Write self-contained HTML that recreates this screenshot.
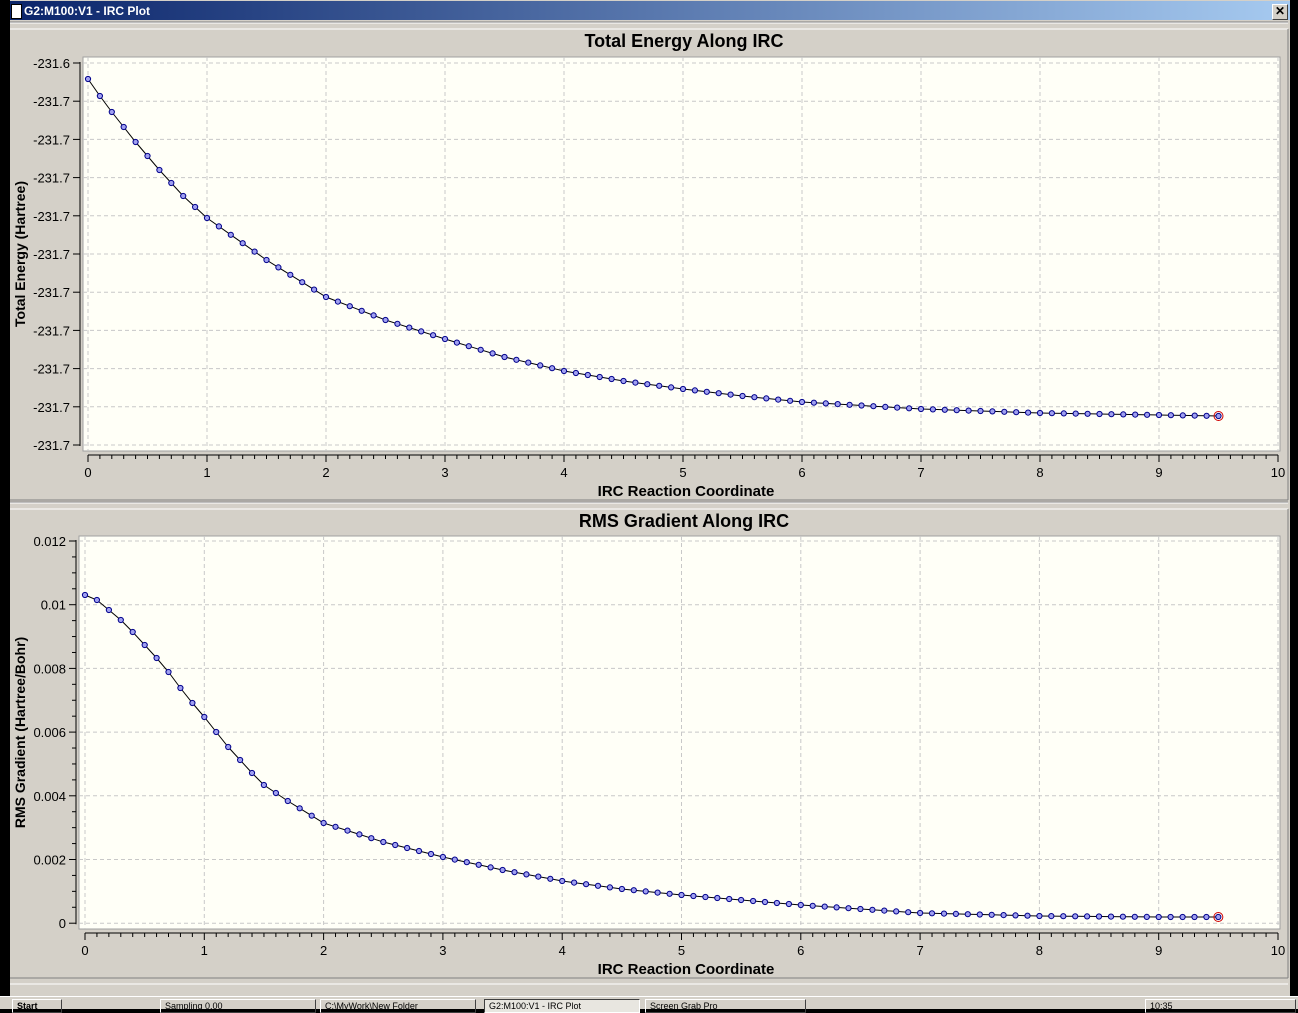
<!DOCTYPE html>
<html><head><meta charset="utf-8">
<style>
html,body{margin:0;padding:0;width:1298px;height:1008px;overflow:hidden;background:#000;font-family:"Liberation Sans",sans-serif;}
#win{position:absolute;left:10px;top:0;width:1280px;height:1008px;background:#d4d0c8;}
#title{position:absolute;left:0;top:1px;width:1280px;height:19px;background:linear-gradient(90deg,#0a246a,#a6caf0);color:#fff;font-weight:bold;font-size:12px;line-height:20px;}
#title span{position:absolute;left:14px;top:0;}
#ico{position:absolute;left:1px;top:3px;width:9px;height:13px;background:#fff;border:1px solid #000;}
#close{position:absolute;right:2px;top:3px;width:14px;height:14px;background:#d4d0c8;border:1px solid;border-color:#fff #404040 #404040 #fff;color:#000;font-size:12px;line-height:13px;text-align:center;font-weight:bold;}
svg{position:absolute;left:0;top:0;}
#task{position:absolute;left:0;top:996px;width:1298px;height:12px;background:#d4d0c8;border-top:1px solid #fff;}
.tb{position:absolute;top:2px;height:12px;border:1px solid;border-color:#fff #404040 #404040 #fff;font-size:9px;line-height:12px;padding-left:4px;}
</style></head><body>
<div id="win"></div>
<svg id="s" width="1298" height="1008" xmlns="http://www.w3.org/2000/svg"></svg>
<div id="title" style="left:10px;"><div id="ico"></div><span>G2:M100:V1 - IRC Plot</span><div id="close">✕</div></div>
<div id="task">
<div class="tb" style="left:12px;width:44px;font-weight:bold;">Start</div>
<div class="tb" style="left:160px;width:150px;">Sampling 0.00</div>
<div class="tb" style="left:320px;width:150px;">C:\MyWork\New Folder</div>
<div class="tb" style="left:484px;width:150px;background:#e8e6e0;border-color:#404040 #fff #fff #404040;">G2:M100:V1 - IRC Plot</div>
<div class="tb" style="left:645px;width:155px;">Screen Grab Pro</div>
<div class="tb" style="left:1145px;width:145px;">10:35</div>
</div>
<script>
var s=document.getElementById('s'),h='';
function panel(top,bot,title,ytitle,px0,px1,py0,py1,x0,x10,ylabels,ylpos,pts,labelX){
  h+='<line x1="10" y1="'+(top)+'" x2="1288" y2="'+top+'" stroke="#808080"/>';
  h+='<line x1="10" y1="'+(top+1)+'" x2="1288" y2="'+(top+1)+'" stroke="#fff"/>';
  h+='<line x1="10" y1="'+(top+7)+'" x2="1288" y2="'+(top+7)+'" stroke="#fff"/>';
  h+='<line x1="1288" y1="'+(top+7)+'" x2="1288" y2="'+bot+'" stroke="#808080"/>';
  h+='<line x1="10" y1="'+bot+'" x2="1288" y2="'+bot+'" stroke="#808080"/>';
  h+='<text x="684" y="'+(top+25)+'" text-anchor="middle" font-weight="bold" font-size="18">'+title+'</text>';
  h+='<rect x="'+px0+'" y="'+py0+'" width="'+(px1-px0)+'" height="'+(py1-py0)+'" fill="#fffff7" stroke="#a0a0a0"/>';
  var u=(x10-x0)/10;
  for(var i=0;i<=10;i++){var x=x0+i*u;
    h+='<line x1="'+x+'" y1="'+py0+'" x2="'+x+'" y2="'+py1+'" stroke="#c8c8c8" stroke-dasharray="4,3"/>';
    h+='<line x1="'+x+'" y1="'+(py1+4)+'" x2="'+x+'" y2="'+(py1+11)+'" stroke="#000"/>';
    h+='<text x="'+x+'" y="'+(py1+26)+'" text-anchor="middle" font-size="13">'+i+'</text>';
  }
  for(var i=0;i<100;i++){if(i%10==0)continue;var x=x0+i*u/10;
    h+='<line x1="'+x+'" y1="'+(py1+4)+'" x2="'+x+'" y2="'+(py1+8)+'" stroke="#000"/>';}
  h+='<line x1="'+x0+'" y1="'+(py1+4)+'" x2="'+x10+'" y2="'+(py1+4)+'" stroke="#000"/>';
  h+='<text x="686" y="'+(py1+45)+'" text-anchor="middle" font-weight="bold" font-size="15">IRC Reaction Coordinate</text>';
  var ax=px0-3;
  h+='<line x1="'+ax+'" y1="'+(ylpos[0]-1)+'" x2="'+ax+'" y2="'+(ylpos[ylpos.length-1]+1)+'" stroke="#000"/>';
  for(var j=0;j<ylabels.length;j++){var y=ylpos[j];
    h+='<line x1="'+px0+'" y1="'+y+'" x2="'+px1+'" y2="'+y+'" stroke="#c8c8c8" stroke-dasharray="4,3"/>';
    h+='<line x1="'+(ax-7)+'" y1="'+y+'" x2="'+ax+'" y2="'+y+'" stroke="#000"/>';
    h+='<text x="'+(ax-10)+'" y="'+(y+5)+'" text-anchor="end" font-size="13">'+ylabels[j]+'</text>';
    if(j<ylabels.length-1&&labelX){for(var k=1;k<4;k++){var yy=y+(ylpos[j+1]-y)*k/4;h+='<line x1="'+(ax-4)+'" y1="'+yy+'" x2="'+ax+'" y2="'+yy+'" stroke="#000"/>';}}
  }
  var cy=(py0+py1)/2;
  h+='<text x="25" y="'+cy+'" transform="rotate(-90 25 '+cy+')" text-anchor="middle" font-weight="bold" font-size="14">'+ytitle+'</text>';
  function interp(x){for(var i=0;i<pts.length-1;i++){if(x<=pts[i+1][0]+1e-9){var a=pts[i],b=pts[i+1];return a[1]+(b[1]-a[1])*(x-a[0])/(b[0]-a[0]);}}return pts[pts.length-1][1];}
  var d='',c='';
  for(var i=0;i<=95;i++){var xv=i/10,x=x0+xv*u,y=interp(xv);d+=(i?'L':'M')+x.toFixed(1)+','+y.toFixed(1);
    c+='<circle cx="'+x.toFixed(1)+'" cy="'+y.toFixed(1)+'" r="2.6" fill="#a0a0f0" stroke="#00008b" stroke-width="1"/>';}
  h+='<path d="'+d+'" fill="none" stroke="#000" stroke-width="1"/>'+c;
  var lx=x0+9.5*u,ly=interp(9.5);
  h+='<circle cx="'+lx+'" cy="'+ly+'" r="4.5" fill="none" stroke="#d00000" stroke-width="1"/>';
}
var e=[[0,79],[0.1,96],[0.2,112],[0.3,127],[0.4,142],[0.5,156],[0.6,170],[0.7,183],[0.8,196],[0.9,207],[1,218],[1.5,260],[2,297],[2.5,320],[3,339],[3.5,357],[4,371],[4.5,381],[5,389],[5.5,396],[6,402],[7,409],[8,413],[9,415],[9.5,416]];
var g=[[0,595],[0.1,600],[0.2,610],[0.3,620],[0.4,632],[0.5,645],[0.6,658],[0.7,672],[0.8,688],[0.9,703],[1,717],[1.1,732],[1.2,747],[1.3,760],[1.4,773],[1.5,785],[1.7,801],[2,823],[2.5,842],[3,857],[3.5,870],[4,881],[4.5,889],[5,895],[6,905],[7,913],[8,916],[9,917],[9.5,917]];
var el=['-231.6','-231.7','-231.7','-231.7','-231.7','-231.7','-231.7','-231.7','-231.7','-231.7','-231.7'];
var ep=[];for(var i=0;i<11;i++)ep.push(63+i*38.2);
panel(22,500,'Total Energy Along IRC','Total Energy (Hartree)',83,1280,57,451,88,1278,el,ep,e,false);
var gl=['0.012','0.01','0.008','0.006','0.004','0.002','0'];
var gp=[];for(var i=0;i<7;i++)gp.push(541+i*63.7);
panel(502,978,'RMS Gradient Along IRC','RMS Gradient (Hartree/Bohr)',79,1280,536,929,85,1278,gl,gp,g,true);
h+='<line x1="10" y1="984" x2="1288" y2="984" stroke="#fff"/>';
s.innerHTML=h;
</script>
</body></html>
